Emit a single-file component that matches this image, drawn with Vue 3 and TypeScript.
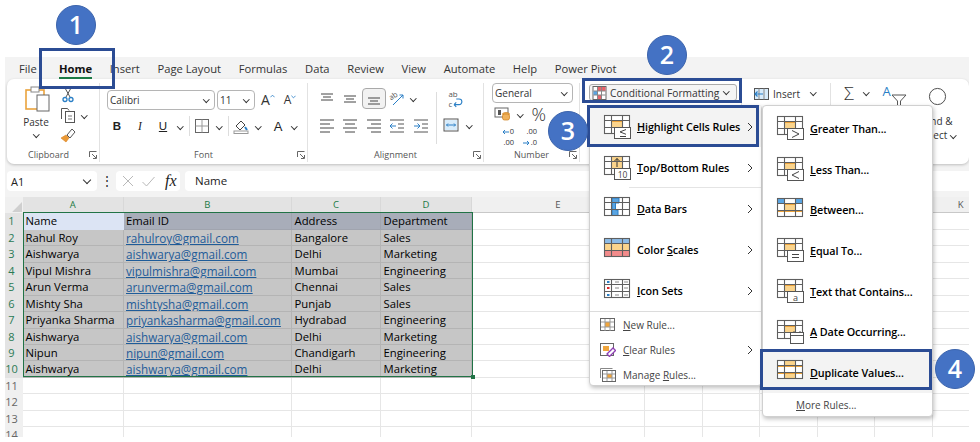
<script setup lang="ts">
const tabs = ['File', 'Home', 'Insert', 'Page Layout', 'Formulas', 'Data', 'Review', 'View', 'Automate', 'Help', 'Power Pivot']

const columns = ['A', 'B', 'C', 'D', 'E', '', '', '', '', '', 'K']
const people: [string, string, string, string][] = [
  ['Rahul Roy', 'rahulroy@gmail.com', 'Bangalore', 'Sales'],
  ['Aishwarya', 'aishwarya@gmail.com', 'Delhi', 'Marketing'],
  ['Vipul Mishra', 'vipulmishra@gmail.com', 'Mumbai', 'Engineering'],
  ['Arun Verma', 'arunverma@gmail.com', 'Chennai', 'Sales'],
  ['Mishty Sha', 'mishtysha@gmail.com', 'Punjab', 'Sales'],
  ['Priyanka Sharma', 'priyankasharma@gmail.com', 'Hydrabad', 'Engineering'],
  ['Aishwarya', 'aishwarya@gmail.com', 'Delhi', 'Marketing'],
  ['Nipun', 'nipun@gmail.com', 'Chandigarh', 'Engineering'],
  ['Aishwarya', 'aishwarya@gmail.com', 'Delhi', 'Marketing'],
]
const rows: string[][] = [['Name', 'Email ID', 'Address', 'Department'], ...people, [], [], [], []]

const frame = `<g fill="none" stroke="#5f5f5f" stroke-width="1.1"><rect x=".5" y=".5" width="25" height="18"/><path d="M.5 5.500h25M.5 12.500h25M7.500 .5v18M18.500 .5v18"/></g>`
const cellHl = `<rect x="8" y="6" width="10" height="6.500" fill="#fbd48c"/><rect x="8" y="5" width="10" height="2" fill="#eda33b"/>`
const overlay = (inner: string) =>
  `<rect x="10.500" y="12.500" width="16" height="11" fill="#fff" stroke="#555"/>${inner}`
const g = (s: string) => `<g fill="none" stroke="#444" stroke-width="1">${s}</g>`
const tableBase = `<rect x=".5" y=".5" width="25" height="18" fill="#fff"/>`

const icons: Record<string, string> = {
  le: tableBase + cellHl + frame + overlay(g('<path d="M22 14.500l-6 2.400 6 2.400M16 21.500h6"/>')),
  top: tableBase + `<rect x="8" y="1" width="10" height="11.500" fill="#fbd48c"/><path d="M13 11V2.500M10.500 5L13 2.500 15.500 5" fill="none" stroke="#333"/>` + frame + overlay(`<text x="18.500" y="21.500" font-size="8.500" text-anchor="middle" fill="#444" font-family="Open Sans">10</text>`),
  bars: tableBase + `<path d="M8 1h7v5h-3.500v7H14v5.500H8z" fill="#5aa5e3" stroke="#2a7fc6"/>` + frame,
  scales: tableBase + `<rect x="1" y="1" width="24" height="5" fill="#8cbbe6"/><rect x="1" y="6" width="24" height="6.500" fill="#fbd48c"/><rect x="1" y="12.500" width="24" height="6" fill="#f28b8b"/>` + frame,
  sets: tableBase + `<rect x="3" y="2" width="2.500" height="2" fill="#2a7fc6"/><rect x="3" y="8" width="2.500" height="2" fill="#d9262b"/><rect x="3" y="15" width="2.500" height="2" fill="#2a7fc6"/><path d="M11 3h4M20 3h4M11 9h4M20 9h4M11 16h4M20 16h4" stroke="#888"/>` + frame,
  gt: tableBase + cellHl + frame + overlay(g('<path d="M15 14.500l7 3.500-7 3.500"/>')),
  lt: tableBase + cellHl + frame + overlay(g('<path d="M22 14.500l-7 3.500 7 3.500"/>')),
  between: tableBase + `<rect x="1" y="1" width="6.500" height="4.500" fill="#5aa5e3"/><rect x="18.500" y="1" width="6.500" height="4.500" fill="#5aa5e3"/><rect x="8" y="6" width="10" height="6.500" fill="#fbd48c"/><rect x="8" y="5" width="10" height="2" fill="#eda33b"/><rect x="1" y="12" width="24" height="2" fill="#eda33b"/>` + frame,
  equal: tableBase + cellHl + frame + overlay(g('<path d="M15 16.500h7M15 19.500h7"/>')),
  text: tableBase + cellHl + frame + overlay(`<text x="18.500" y="21.500" font-size="9" text-anchor="middle" fill="#444" font-family="Open Sans">a</text>`),
  date: tableBase + cellHl + frame + `<rect x="13.500" y="12.500" width="13" height="11" fill="#fff" stroke="#555"/><path d="M13.500 15.500h13M17 11v2M23 11v2" stroke="#555"/>`,
  dup: tableBase + `<rect x="8" y="1" width="10" height="4.500" fill="#fbd48c"/><rect x="8" y="12.500" width="10" height="6" fill="#fbd48c"/><rect x="1" y="5" width="24" height="2" fill="#eda33b"/><rect x="1" y="12" width="24" height="2" fill="#eda33b"/>` + frame,
}

interface Entry { icon: string; pre: string; key: string; post: string }
const mainEntries: Entry[] = [
  { icon: 'le', pre: '', key: 'H', post: 'ighlight Cells Rules' },
  { icon: 'top', pre: '', key: 'T', post: 'op/Bottom Rules' },
  { icon: 'bars', pre: '', key: 'D', post: 'ata Bars' },
  { icon: 'scales', pre: 'Color ', key: 'S', post: 'cales' },
  { icon: 'sets', pre: '', key: 'I', post: 'con Sets' },
]
const subEntries: Entry[] = [
  { icon: 'gt', pre: '', key: 'G', post: 'reater Than...' },
  { icon: 'lt', pre: '', key: 'L', post: 'ess Than...' },
  { icon: 'between', pre: '', key: 'B', post: 'etween...' },
  { icon: 'equal', pre: '', key: 'E', post: 'qual To...' },
  { icon: 'text', pre: '', key: 'T', post: 'ext that Contains...' },
  { icon: 'date', pre: '', key: 'A', post: ' Date Occurring...' },
  { icon: 'dup', pre: '', key: 'D', post: 'uplicate Values...' },
]

const alignTop = ['M2 3h12M4 6h8M2 9h12', 'M2 5h12M4 8h8M2 11h12', 'M2 7h12M4 10h8M2 13h12']
const alignBottom = ['M1 2h14M1 6h10M1 10h14M1 14h10', 'M1 2h14M3 6h10M1 10h14M3 14h10', 'M1 2h14M5 6h10M1 10h14M5 14h10']

const callouts = [
  { n: 1, cls: 'c1' },
  { n: 2, cls: 'c2' },
  { n: 3, cls: 'c3' },
  { n: 4, cls: 'c4' },
]
const boxes = ['b1', 'b2', 'b3', 'b4']
</script>

<template>
  <div class="page">
    <div class="app">
      <nav class="tabs">
        <span v-for="t in tabs" :key="t" class="tab" :class="{ active: t === 'Home' }">{{ t }}</span>
      </nav>

      <section class="ribbon">
        <div class="group clip">
          <div class="tools clip-tools">
            <div class="paste">
              <svg class="paste-icon" viewBox="0 0 26 26">
                <rect x="1" y="4" width="18" height="19" fill="#fff" stroke="#eaa33c" stroke-width="1.600" />
                <rect x="6" y="1" width="8" height="5" fill="#fff" stroke="#888" />
                <rect x="12" y="9" width="12" height="16" fill="#fff" stroke="#666" />
              </svg>
              <span class="paste-label">Paste</span>
              <i class="chev"></i>
            </div>
            <div class="clip-side">
              <svg class="ico16" viewBox="0 0 16 16">
                <path d="M5 1l5 9M11 1L6 10" stroke="#555" fill="none" />
                <circle cx="5" cy="12.500" r="2" fill="none" stroke="#2a7fc6" stroke-width="1.300" />
                <circle cx="11" cy="12.500" r="2" fill="none" stroke="#2a7fc6" stroke-width="1.300" />
              </svg>
              <div class="copy-row">
                <svg class="ico16" viewBox="0 0 16 16">
                  <path d="M1.500 12V1.500h6l1.500 2" fill="none" stroke="#555" />
                  <rect x="5.500" y="4.500" width="9" height="11" fill="#fff" stroke="#555" />
                  <path d="M8 9h4M8 12h4" stroke="#777" />
                </svg>
                <i class="chev"></i>
              </div>
              <svg class="ico16" viewBox="0 0 16 16">
                <path d="M1 11l5-3 3 3-3 4z" fill="#eb9a36" stroke="#d9801f" stroke-width=".6" />
                <path d="M7 8l5-6 3 3-5 6z" fill="#fff" stroke="#555" />
              </svg>
            </div>
          </div>
          <div class="label">Clipboard<svg class="launch" viewBox="0 0 8 8"><path d="M.5 6V.5H7.500M3 3l4 4M4 7.500h3.500V4" fill="none" stroke="#666" /></svg></div>
        </div>

        <div class="group font">
          <div class="tools font-tools">
            <div class="font-row1">
              <div class="select family">Calibri<i class="chev"></i></div>
              <div class="select size">11<i class="chev"></i></div>
              <span class="grow">A<svg viewBox="0 0 6 4"><path d="M.5 3.500L3 1l2.500 2.500" fill="none" stroke="#2a7fc6" /></svg></span>
              <span class="shrink">A<svg viewBox="0 0 6 4"><path d="M.5.500L3 3 5.500.5" fill="none" stroke="#2a7fc6" /></svg></span>
            </div>
            <div class="font-row2">
              <b class="fmt">B</b>
              <em class="fmt italic">I</em>
              <span class="fmt under">U</span>
              <i class="chev"></i>
              <span class="vline"></span>
              <svg class="ico16" viewBox="0 0 16 16"><rect x="1.500" y="1.500" width="13" height="13" fill="none" stroke="#666" /><path d="M8 1.500v13M1.500 8h13" stroke="#999" /></svg>
              <i class="chev"></i>
              <span class="vline"></span>
              <svg class="ico16" viewBox="0 0 16 16"><path d="M3 8l5-5 4 4-5 5z" fill="#fff" stroke="#444" /><path d="M12 9l2 3" stroke="#2a7fc6" stroke-width="2" /><rect x="1" y="13" width="14" height="2.500" fill="#fff" stroke="#999" /></svg>
              <i class="chev"></i>
              <span class="fmt color-a">A</span>
              <i class="chev"></i>
            </div>
          </div>
          <div class="label">Font<svg class="launch" viewBox="0 0 8 8"><path d="M.5 6V.5H7.500M3 3l4 4M4 7.500h3.500V4" fill="none" stroke="#666" /></svg></div>
        </div>

        <div class="group align">
          <div class="tools align-tools">
            <div class="align-left">
              <div class="align-row">
                <span v-for="(d, i) in alignTop" :key="d" class="align-cell" :class="{ pressed: i === 2 }">
                  <svg class="ico16" viewBox="0 0 16 16"><path :d="d" stroke="#444" fill="none" /></svg>
                </span>
                <span class="align-cell">
                  <svg class="ico16 open" viewBox="0 0 16 16"><text x="1" y="8" font-size="7.500" fill="#555" font-family="Open Sans" transform="rotate(-35 4 7)">ab</text><path d="M4 14L14 4M10.500 4H14v3.500" stroke="#2a7fc6" fill="none" /></svg>
                </span>
                <span class="align-cell chev-cell"><i class="chev"></i></span>
              </div>
              <div class="align-row">
                <span v-for="d in alignBottom" :key="d" class="align-cell">
                  <svg class="ico16" viewBox="0 0 16 16"><path :d="d" stroke="#444" fill="none" /></svg>
                </span>
                <span class="align-cell">
                  <svg class="ico16" viewBox="0 0 16 16"><path d="M1 2h14M9 6h6M9 10h6M1 14h14" stroke="#555" fill="none" /><path d="M1 8h6M3.500 5.500L1 8l2.500 2.500" stroke="#2a7fc6" fill="none" /></svg>
                </span>
                <span class="align-cell">
                  <svg class="ico16" viewBox="0 0 16 16"><path d="M1 2h14M9 6h6M9 10h6M1 14h14" stroke="#555" fill="none" /><path d="M1 8h6M4.500 5.500L7 8l-2.500 2.500" stroke="#2a7fc6" fill="none" /></svg>
                </span>
              </div>
            </div>
            <span class="vline tall"></span>
            <div class="align-right">
              <svg class="wrap-icon" viewBox="0 0 16 16"><text x="3" y="6" font-size="7" fill="#555" font-family="Open Sans">ab</text><text x="3" y="15" font-size="7" fill="#555" font-family="Open Sans">c</text><path d="M8 13h4.500a2.500 2.500 0 000-5H10M8 13l2-2M8 13l2 2" stroke="#2a7fc6" fill="none" /></svg>
              <div class="merge-row">
                <svg class="ico16" viewBox="0 0 16 16"><rect x="1" y="2" width="14" height="12" fill="#fff" stroke="#555" /><rect x="2" y="3" width="12" height="10" fill="#d8ecfb" /><path d="M3.500 8h9M5 6.500L3.500 8 5 9.500M11 6.500L12.500 8 11 9.500" stroke="#2a7fc6" fill="none" /></svg>
                <i class="chev"></i>
              </div>
            </div>
          </div>
          <div class="label">Alignment<svg class="launch" viewBox="0 0 8 8"><path d="M.5 6V.5H7.500M3 3l4 4M4 7.500h3.500V4" fill="none" stroke="#666" /></svg></div>
        </div>

        <div class="group number">
          <div class="tools number-tools">
            <div class="select general">General<i class="chev"></i></div>
            <div class="num-row">
              <svg class="ico16" viewBox="0 0 16 16"><rect x="1" y="2" width="13" height="9" fill="#fff" stroke="#666" /><rect x="4" y="4" width="3" height="5" fill="#555" /><ellipse cx="12" cy="8" rx="3.500" ry="1.500" fill="#f0b25c" stroke="#cf7e18" stroke-width=".7" /><rect x="8.500" y="8" width="7" height="6" rx="2" fill="#f0b25c" stroke="#cf7e18" stroke-width=".7" /></svg>
              <i class="chev"></i>
              <span class="percent">%</span>
              <span class="comma">,</span>
            </div>
            <div class="decimals">
              <span class="dec">
                <span class="dec-line">
                  <svg class="dec-arrow" viewBox="0 0 7 6"><path d="M7 3H1M3 1L1 3l2 2" fill="none" stroke="#2a7fc6" /></svg>0
                </span>
                <span class="dec-line">.00</span>
              </span>
              <span class="dec">
                <span class="dec-line">.00</span>
                <span class="dec-line">
                  <svg class="dec-arrow" viewBox="0 0 7 6"><path d="M0 3h6M4 1l2 2-2 2" fill="none" stroke="#2a7fc6" /></svg>.0
                </span>
              </span>
            </div>
          </div>
          <div class="label">Number<svg class="launch" viewBox="0 0 8 8"><path d="M.5 6V.5H7.500M3 3l4 4M4 7.500h3.500V4" fill="none" stroke="#666" /></svg></div>
        </div>

        <div class="group styles">
          <div class="cf-btn">
            <svg class="ico14" viewBox="0 0 14 14"><rect x=".5" y=".5" width="13" height="13" fill="#fff" stroke="#666" /><rect x="5" y="1" width="8" height="4" fill="#e8636a" /><rect x="1" y="5" width="4" height="4" fill="#5aa5e3" /><rect x="5" y="9" width="4" height="4" fill="#e8636a" /><path d="M5 1v12M9 1v12M1 5h12M1 9h12" stroke="#888" /></svg>
            Conditional Formatting
            <i class="chev"></i>
          </div>
        </div>

        <div class="group cells">
          <div class="insert">
            <svg class="ico14" viewBox="0 0 15 14"><rect x=".5" y="1.500" width="14" height="11" fill="#d8ecfb" stroke="#555" /><path d="M5 1.500v11M10 1.500v11" stroke="#888" /><path d="M1 7h8M3.500 4.500L1 7l2.500 2.500" stroke="#2a7fc6" stroke-width="1.200" fill="none" /></svg>
            <span>Insert</span>
            <i class="chev"></i>
          </div>
        </div>

        <div class="group edit">
          <span class="sigma">Σ</span>
          <i class="chev sigma-chev"></i>
          <span class="sort">
            <span class="sort-a">A</span>
            <svg class="funnel" viewBox="0 0 16 13"><path d="M1 1h14L9.500 7v5.500l-3-1.500V7z" fill="#fff" stroke="#555" /></svg>
          </span>
          <span class="finder">
            <svg class="lens" viewBox="0 0 20 20"><circle cx="10" cy="10" r="8.500" fill="#fff" stroke="#444" /></svg>
            <span class="find-text">Find &amp;</span>
            <span class="find-text">Select <i class="chev"></i></span>
          </span>
        </div>
      </section>

      <section class="formula">
        <div class="namebox">A1<i class="chev"></i></div>
        <span class="dots">⋮</span>
        <div class="fx-box">
          <svg class="ico12" viewBox="0 0 12 12"><path d="M1 1l10 10M11 1L1 11" stroke="#b9b9b9" fill="none" /></svg>
          <svg class="check" viewBox="0 0 14 12"><path d="M1 7l4 4 8-9" stroke="#b9b9b9" fill="none" /></svg>
          <span class="fx">fx</span>
        </div>
        <div class="input">Name</div>
      </section>

      <section class="sheet">
        <div class="grid">
          <div class="corner"><svg viewBox="0 0 10 10"><path d="M10 1v9H1z" fill="#cfcfcf" /></svg></div>
          <div v-for="(c, i) in columns" :key="i" class="col-head" :class="{ sel: i < 4 }">{{ c }}</div>
          <template v-for="(r, ri) in rows" :key="ri">
            <div class="row-head" :class="{ sel: ri < 10 }">{{ ri + 1 }}</div>
            <div
              v-for="(c, ci) in columns"
              :key="ci"
              class="cell"
              :class="{
                sel: ri < 10 && ci < 4,
                head: ri === 0 && ci > 0 && ci < 4,
                active: ri === 0 && ci === 0,
                link: ci === 1 && ri > 0 && ri < 10,
              }"
            >{{ r[ci] }}</div>
          </template>
        </div>
        <div class="selection"><i class="handle"></i></div>
      </section>
    </div>

    <div class="menu main-menu">
      <div v-for="(e, i) in mainEntries" :key="e.post" class="item" :class="{ hover: i === 0, split: i === 1 }">
        <svg class="menu-icon" viewBox="0 0 28 24" v-html="icons[e.icon]"></svg>
        <span class="item-text">{{ e.pre }}<u>{{ e.key }}</u>{{ e.post }}</span>
        <svg class="arrow" viewBox="0 0 6 10"><path d="M1 1l4 4-4 4" fill="none" stroke="#333" /></svg>
      </div>
      <div class="small-list">
        <div class="small">
          <svg class="small-icon" viewBox="0 0 16 14"><rect x=".5" y=".5" width="14" height="12" fill="#fff" stroke="#666" /><rect x="5" y="4" width="5" height="5" fill="#f0a53c" /><path d="M5 1v12M10 1v12M1 4h13M1 9h13" stroke="#999" /></svg>
          <span><u>N</u>ew Rule...</span>
        </div>
        <div class="small">
          <svg class="small-icon" viewBox="0 0 16 14"><rect x=".5" y=".5" width="13" height="12" fill="#fff" stroke="#666" /><rect x="3" y="3" width="6" height="5" fill="#f0a53c" /><path d="M7 11l6-6 2.500 2.500-6 6z" fill="#fff" stroke="#8e3fb3" stroke-width="1.300" /></svg>
          <span><u>C</u>lear Rules</span>
          <svg class="arrow" viewBox="0 0 6 10"><path d="M1 1l4 4-4 4" fill="none" stroke="#333" /></svg>
        </div>
        <div class="small">
          <svg class="small-icon" viewBox="0 0 16 14"><path d="M.5 10V.5h12" fill="none" stroke="#888" /><rect x="2.500" y="2.500" width="13" height="11" fill="#fff" stroke="#666" /><rect x="7" y="6" width="5" height="4" fill="#f0a53c" /><path d="M7 3v10M12 3v10M3 6h12M3 10h12" stroke="#999" /></svg>
          <span>Manage <u>R</u>ules...</span>
        </div>
      </div>
    </div>

    <div class="menu sub-menu">
      <div v-for="(e, i) in subEntries" :key="e.post" class="item sub-item" :class="{ hover: i === 6 }">
        <svg class="menu-icon" viewBox="0 0 28 24" v-html="icons[e.icon]"></svg>
        <span class="item-text">{{ e.pre }}<u>{{ e.key }}</u>{{ e.post }}</span>
      </div>
      <div class="more"><u>M</u>ore Rules...</div>
    </div>

    <div v-for="b in boxes" :key="b" class="box" :class="b"></div>
    <div v-for="c in callouts" :key="c.n" class="callout" :class="c.cls">{{ c.n }}</div>
  </div>
</template>

<style>
html, body { margin: 0; background: #fff; }
</style>

<style scoped>
.page {
  position: relative;
  width: 980px;
  height: 442px;
  overflow: hidden;
  background: #fff;
  padding: 57px 11px 5px 5px;
  box-sizing: border-box;
  font-family: "Open Sans", "Noto Sans", sans-serif;
  color: #222;
}
.app {
  height: 100%;
  background: #f3f3f3;
  overflow: hidden;
  display: flex;
  flex-direction: column;
}
.tabs {
  height: 22px;
  flex: none;
  display: flex;
  align-items: center;
  gap: 17.7px;
  padding-left: 14px;
  font-size: 11.2px;
  color: #333;
}
.tab { position: relative; }
.tab.active { font-weight: 700; color: #111; margin-left: 4.5px; }
.tab.active::after {
  content: "";
  position: absolute;
  left: 0;
  right: 0;
  bottom: -3px;
  height: 2px;
  background: #1c7a45;
}
.ribbon {
  height: 85px;
  flex: none;
  margin-left: 2px;
  padding: 4px 0 2px;
  box-sizing: border-box;
  background: #fff;
  border-radius: 7px;
  box-shadow: 0 1px 3px rgba(0,0,0,.22);
  display: flex;
}
.group {
  position: relative;
  display: flex;
  flex-direction: column;
  flex: none;
  border-right: 1px solid #e2e2e2;
  box-sizing: border-box;
}
.tools { flex: 1; min-height: 0; }
.label {
  position: relative;
  height: 14px;
  font-size: 9px;
  line-height: 14px;
  color: #555;
  text-align: center;
}
.launch {
  position: absolute;
  right: 2px;
  top: 3px;
  width: 8px;
  height: 8px;
}
.chev {
  display: inline-block;
  width: 3.5px;
  height: 3.5px;
  border-right: 1px solid #333;
  border-bottom: 1px solid #333;
  transform: rotate(45deg);
  flex: none;
}
.ico16 { width: 16px; height: 16px; flex: none; display: block; }
.ico16.open { overflow: visible; }
.ico14 { width: 15px; height: 14px; flex: none; display: block; }
.ico12 { width: 12px; height: 12px; flex: none; display: block; }

.clip { width: 93px; }
.clip .label { padding-right: 9px; }
.clip-tools { display: flex; padding: 3px 0 0 14px; gap: 9px; }
.paste { width: 30px; display: flex; flex-direction: column; align-items: center; }
.paste-icon { width: 26px; height: 26px; margin-left: 3px; }
.paste-label { font-size: 10px; margin-top: 3px; color: #333; line-height: 14px; }
.paste .chev { margin-top: 3px; }
.clip-side { display: flex; flex-direction: column; gap: 4px; padding-top: 1px; }
.copy-row { display: flex; align-items: center; gap: 6px; }

.font { width: 208px; }
.font-tools { padding: 7px 0 0 7px; display: flex; flex-direction: column; gap: 6px; }
.font-row1 { display: flex; align-items: center; height: 20px; }
.select {
  height: 20px;
  box-sizing: border-box;
  border: 1px solid #b5b5b5;
  border-radius: 4px;
  font-size: 10px;
  padding: 0 6px 0 2px;
  display: flex;
  align-items: center;
  justify-content: space-between;
  background: #fff;
  color: #333;
}
.select .chev { margin-top: -2px; }
.family { width: 108px; margin-right: 2px; }
.size { width: 38px; }
.grow, .shrink { display: flex; align-items: flex-start; color: #333; line-height: 1; }
.grow { font-size: 14px; margin-left: 6px; }
.shrink { font-size: 12px; margin-left: 9px; }
.grow svg, .shrink svg { width: 5px; height: 4px; margin-top: 1px; }
.font-row2 {
  display: grid;
  grid-template-columns: 20px 26px 20px 14px 4px 22px 12px 6px 20px 14px 26px 6px;
  justify-items: center;
  align-items: center;
  height: 20px;
}
.fmt { font-size: 11.5px; color: #222; font-style: normal; font-family: "Liberation Sans", sans-serif; }
.italic { font-style: italic; font-family: "Liberation Serif", serif; }
.under { text-decoration: underline; }
.color-a { font-size: 13px; }
.vline { width: 1px; height: 20px; background: #ddd; display: block; }
.vline.tall { height: 52px; margin: 4px 5px 0 0; }

.align { width: 176px; }
.align-tools { display: flex; padding: 5px 0 0 7px; }
.align-left { width: 121px; display: flex; flex-direction: column; gap: 6px; }
.align-row { display: flex; height: 21px; }
.align-cell { width: 23.5px; height: 21px; display: flex; align-items: center; justify-content: center; box-sizing: border-box; }
.chev-cell { justify-content: flex-start; width: 12px; padding-left: 2px; }
.pressed { border: 1px solid #a9a9a9; border-radius: 4px; background: #f2f2f2; }
.align-right { display: flex; flex-direction: column; gap: 9px; width: 36px; padding: 2px 0 0 1px; align-items: flex-start; }
.wrap-icon { width: 18px; height: 18px; margin-left: 2px; display: block; overflow: visible; }
.merge-row { display: flex; align-items: center; gap: 8px; }

.number { width: 96px; }
.number-tools { padding: 0 0 0 8px; display: flex; flex-direction: column; }
.general { width: 81px; }
.num-row { display: flex; align-items: center; height: 22px; padding-left: 2px; }
.num-row .chev { margin-left: 8px; }
.percent { font-size: 18px; margin-left: 9px; color: #333; font-weight: 300; }
.comma { font-size: 16px; margin-left: 8px; }
.decimals { display: flex; gap: 4px; font-size: 7.5px; color: #333; padding-left: 3px; margin-top: 1px; }
.dec { display: flex; flex-direction: column; align-items: flex-end; width: 19px; }
.dec-line { display: flex; align-items: center; height: 11px; line-height: 11px; }
.dec-arrow { width: 7px; height: 6px; flex: none; margin-right: 1px; }

.styles { width: 162px; padding: 1px 0 0 9px; }
.cf-btn {
  width: 148px;
  height: 17px;
  box-sizing: border-box;
  border: 1px solid #aaa;
  border-radius: 3px;
  background: #f5f5f5;
  display: flex;
  align-items: center;
  font-size: 10.2px;
  color: #333;
  gap: 3px;
  padding-left: 2px;
  white-space: nowrap;
}
.cf-btn .chev { margin: -2px 0 0 2px; }
.cells { width: 89px; }
.insert { display: flex; align-items: center; font-size: 10px; padding: 2px 0 0 12px; gap: 4px; color: #333; height: 17px; }
.insert .chev { margin: -2px 0 0 7px; }
.edit { flex: 1; border-right: 0; flex-direction: row; align-items: flex-start; padding: 1px 0 0 13px; }
.sigma { font-size: 18px; line-height: 19px; color: #333; font-weight: 300; }
.sigma-chev { margin: 6px 0 0 10px; }
.sort { display: flex; align-items: flex-start; margin-left: 14px; }
.sort-a { font-size: 13px; color: #2a7fc6; line-height: 14px; }
.funnel { width: 16px; height: 13px; margin-top: 10px; }
.finder { position: relative; display: flex; flex-direction: column; align-items: center; margin-left: 13px; }
.lens { width: 19px; height: 19px; margin: 3px 0 8px; }
.find-text { font-size: 10px; line-height: 14px; color: #333; white-space: nowrap; }
.find-text .chev { margin: 0 0 2px 1px; }

.formula {
  height: 20px;
  flex: none;
  margin: 7px 0 6px 2px;
  display: flex;
  align-items: stretch;
  font-size: 11.500px;
}
.namebox {
  width: 90px;
  box-sizing: border-box;
  background: #fff;
  border-radius: 4px;
  display: flex;
  align-items: center;
  justify-content: space-between;
  padding: 0 7px 0 4px;
  font-size: 11px;
}
.namebox .chev { width: 5px; height: 5px; margin-top: -3px; }
.dots { width: 19px; text-align: center; line-height: 19px; font-size: 12px; }
.fx-box {
  width: 64px;
  box-sizing: border-box;
  background: #fff;
  border-radius: 4px;
  display: flex;
  align-items: center;
  padding: 0 0 0 6px;
  gap: 7px;
}
.check { width: 15px; height: 12px; flex: none; display: block; }
.fx { font-family: "Liberation Serif", serif; font-style: italic; font-size: 16px; margin-left: 2px; }
.input {
  flex: 1;
  margin-left: 5px;
  background: #fff;
  border-radius: 4px 0 0 4px;
  padding-left: 10px;
  line-height: 20px;
}

.sheet { position: relative; flex: 1; min-height: 0; overflow: hidden; background: #fff; }
.grid {
  display: grid;
  grid-template-columns: 18px 100.5px 168.500px 89px 91px 173px repeat(6, 57.500px);
  grid-auto-rows: 16.440px;
  width: 1100px;
  font-size: 11.300px;
  font-weight: 500;
  line-height: 16px;
}
.corner { background: #f0f0f0; display: flex; align-items: flex-end; justify-content: flex-end; padding: 0 1px 1px 0; box-sizing: border-box; }
.corner svg { width: 11px; height: 11px; }
.col-head {
  background: #f0f0f0;
  text-align: center;
  color: #555;
  border-right: 1px solid #d8d8d8;
  border-bottom: 1px solid #c8c8c8;
  box-sizing: border-box;
  font-size: 9.500px;
  font-weight: 400;
}
.col-head.sel { background: #e3e3e3; color: #1c7a45; }
.row-head {
  background: #f0f0f0;
  color: #666;
  text-align: center;
  padding-right: 5px;
  font-size: 11px;
  font-weight: 400;
  box-sizing: border-box;
}
.row-head.sel { background: #e3e3e3; color: #2a7a55; }
.cell {
  box-sizing: border-box;
  border-right: 1px solid #e6e6e6;
  border-bottom: 1px solid #e6e6e6;
  padding-left: 2.500px;
  white-space: nowrap;
  overflow: hidden;
  color: #000;
}
.cell.sel { background: #c6c6c6; border-color: #b4b4b4; }
.cell.head { background: #a8adb9; border-color: #a0a4ae; }
.cell.active { background: #dce4f4; border-color: #dce4f4; }
.cell.link { color: #1f5c99; text-decoration: underline; font-size: 11.700px; }
.selection {
  position: absolute;
  left: 18px;
  top: 15px;
  width: 450px;
  height: 165px;
  box-sizing: border-box;
  border: 1.500px solid #217346;
  pointer-events: none;
}
.handle {
  position: absolute;
  right: -3px;
  bottom: -3px;
  width: 4px;
  height: 4px;
  background: #217346;
}

.menu {
  position: absolute;
  box-sizing: border-box;
  background: #fff;
  border: 1px solid #d0d0d0;
  border-radius: 4px;
  box-shadow: 1px 2px 4px rgba(0,0,0,.25);
  font-size: 10.800px;
  color: #000;
}
.main-menu { left: 589px; top: 105px; width: 173px; height: 281px; }
.sub-menu { left: 762px; top: 105px; width: 171px; height: 312px; padding-top: 2px; }
.item {
  position: relative;
  height: 41px;
  display: flex;
  align-items: center;
  padding-left: 14px;
  box-sizing: border-box;
}
.sub-item { height: 40.700px; }
.item.hover { background: #f3f3f3; }
.item.split::after {
  content: "";
  position: absolute;
  left: 39px;
  right: 0;
  bottom: 0;
  height: 1px;
  background: #e4e4e4;
}
.menu-icon { width: 28px; height: 24px; flex: none; margin-right: 5px; overflow: visible; }
.item-text { font-weight: 600; white-space: nowrap; letter-spacing: -.1px; }
.arrow { position: absolute; right: 8px; top: 50%; margin-top: -5px; width: 6px; height: 10px; }
.small-list { border-top: 1px solid #dcdcdc; }
.small {
  position: relative;
  height: 25px;
  display: flex;
  align-items: center;
  padding-left: 10px;
  gap: 7px;
  color: #444;
  font-size: 10px;
}
.small-icon { width: 16px; height: 14px; flex: none; }
.more { height: 25px; line-height: 25px; padding-left: 33px; color: #444; font-size: 10px; }

.box {
  position: absolute;
  box-sizing: border-box;
  border: 3px solid #2b4c94;
  pointer-events: none;
}
.b1 { left: 39px; top: 48px; width: 76px; height: 41px; }
.b2 { left: 582px; top: 78px; width: 160px; height: 25px; }
.b3 { left: 587px; top: 105px; width: 172px; height: 42px; }
.b4 { left: 760px; top: 349px; width: 172px; height: 41px; }
.callout {
  position: absolute;
  width: 40px;
  height: 40px;
  box-sizing: border-box;
  border-radius: 50%;
  background: #4472c4;
  border: 1px solid #3c64ac;
  color: #fff;
  font-size: 25px;
  font-weight: 600;
  line-height: 37px;
  text-align: center;
}
.c1 { left: 56px; top: 5px; }
.c2 { left: 647px; top: 35px; }
.c3 { left: 548px; top: 111px; }
.c4 { left: 935px; top: 349px; }
</style>
